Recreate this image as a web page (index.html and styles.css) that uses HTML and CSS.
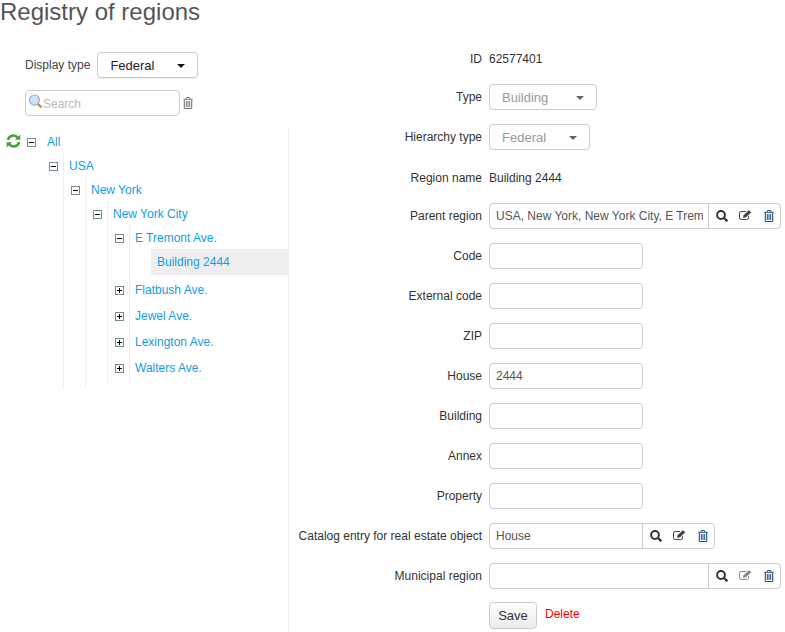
FILE: index.html
```html
<!DOCTYPE html>
<html lang="en">
<head>
<meta charset="utf-8">
<title>Registry of regions</title>
<link rel="stylesheet" href="styles.css">
</head>
<body>
<svg class="defs" width="0" height="0" aria-hidden="true">
  <symbol id="i-search" viewBox="0 0 12 12"><circle cx="5" cy="5" r="3.900" fill="none" stroke="currentColor" stroke-width="2"/><path d="M7.700 7.700l3.600 3.600" fill="none" stroke="currentColor" stroke-width="2.300"/></symbol>
  <symbol id="i-edit" viewBox="0 0 13 10"><path d="M9.500 6v1.800A1.700 1.700 0 0 1 7.800 9.500H2.200A1.700 1.700 0 0 1 .5 7.800V3.200A1.700 1.700 0 0 1 2.200 1.500H7" fill="none" stroke="currentColor" stroke-width="1"/><path d="M4.500 5.200L9.800 .3 12.400 2.300 7 7.300 4 7.900z" fill="currentColor"/></symbol>
  <symbol id="i-trash" viewBox="0 0 10 12"><path d="M.3 2.300h9.400M3.200 2.300V1.200q0-.7.7-.7h2.200q.7 0 .7.700v1.100" fill="none" stroke="currentColor" stroke-width="1"/><path d="M1.300 2.800v8q0 .7.7.7h6q.7 0 .7-.7v-8" fill="none" stroke="currentColor" stroke-width="1.100"/><path d="M3.300 4v6M5 4v6M6.700 4v6" fill="none" stroke="currentColor" stroke-width="1"/></symbol>
</svg>
<div class="page">
  <h1 class="title">Registry of regions</h1>
  <div class="main">
    <div class="left">
      <div class="filter">
        <span class="filter-label">Display type</span>
        <div class="select select-left"><span>Federal</span><i class="caret"></i></div>
      </div>
      <div class="search-row">
        <div class="search">
          <svg class="search-icon" width="15" height="15" viewBox="0 0 15 15"><path d="M9.500 9.500l4 4" stroke="#c98a4a" stroke-width="2.400"/><circle cx="6.500" cy="6" r="5" fill="#cfe3f6" stroke="#8fb4d8" stroke-width="1.200"/></svg>
          <span>Search</span>
        </div>
        <svg class="search-trash"><use href="#i-trash"/></svg>
      </div>
      <div class="tree">
        <div class="node">
          <div class="row root">
            <svg class="refresh" width="15" height="14" viewBox="0 0 15 14"><path d="M2 6A5.400 5.400 0 0 1 11.700 3.800M13 8A5.400 5.400 0 0 1 3.300 10.200" fill="none" stroke="#4a9e3c" stroke-width="2.600"/><path d="M14.300 .4v5.400H8.900zM.7 13.600V8.200h5.400z" fill="#4a9e3c"/></svg>
            <i class="tog minus"></i><a>All</a>
          </div>
          <div class="kids k1">
            <div class="node">
              <div class="row"><i class="tog minus"></i><a>USA</a></div>
              <div class="kids">
                <div class="node">
                  <div class="row"><i class="tog minus"></i><a>New York</a></div>
                  <div class="kids">
                    <div class="node">
                      <div class="row"><i class="tog minus"></i><a>New York City</a></div>
                      <div class="kids">
                        <div class="node">
                          <div class="row"><i class="tog minus"></i><a>E Tremont Ave.</a></div>
                          <div class="kids leaf">
                            <div class="row selected"><a>Building 2444</a></div>
                          </div>
                        </div>
                        <div class="row"><i class="tog plus"></i><a>Flatbush Ave.</a></div>
                        <div class="row"><i class="tog plus"></i><a>Jewel Ave.</a></div>
                        <div class="row"><i class="tog plus"></i><a>Lexington Ave.</a></div>
                        <div class="row"><i class="tog plus"></i><a>Walters Ave.</a></div>
                      </div>
                    </div>
                  </div>
                </div>
              </div>
            </div>
          </div>
        </div>
      </div>
    </div>
    <div class="form">
      <div class="f-row f-id"><label>ID</label><span>62577401</span></div>
      <div class="f-row"><label>Type</label><div class="select off sel-type"><span>Building</span><i class="caret"></i></div></div>
      <div class="f-row"><label>Hierarchy type</label><div class="select off sel-hier"><span>Federal</span><i class="caret"></i></div></div>
      <div class="f-row f-name"><label>Region name</label><span>Building 2444</span></div>
      <div class="f-row"><label>Parent region</label>
        <div class="group wide"><div class="g-input">USA, New York, New York City, E Tremont Ave.</div><div class="g-btns"><svg class="ic-s"><use href="#i-search"/></svg><svg class="ic-e"><use href="#i-edit"/></svg><svg class="ic-t"><use href="#i-trash"/></svg></div></div>
      </div>
      <div class="f-row"><label>Code</label><div class="input"></div></div>
      <div class="f-row"><label>External code</label><div class="input"></div></div>
      <div class="f-row"><label>ZIP</label><div class="input"></div></div>
      <div class="f-row"><label>House</label><div class="input">2444</div></div>
      <div class="f-row"><label>Building</label><div class="input"></div></div>
      <div class="f-row"><label>Annex</label><div class="input"></div></div>
      <div class="f-row"><label>Property</label><div class="input"></div></div>
      <div class="f-row"><label>Catalog entry for real estate object</label>
        <div class="group narrow"><div class="g-input">House</div><div class="g-btns"><svg class="ic-s"><use href="#i-search"/></svg><svg class="ic-e"><use href="#i-edit"/></svg><svg class="ic-t"><use href="#i-trash"/></svg></div></div>
      </div>
      <div class="f-row"><label>Municipal region</label>
        <div class="group wide"><div class="g-input"></div><div class="g-btns"><svg class="ic-s"><use href="#i-search"/></svg><svg class="ic-e muted"><use href="#i-edit"/></svg><svg class="ic-t"><use href="#i-trash"/></svg></div></div>
      </div>
      <div class="f-row f-actions"><span></span><div class="actions"><button class="save" type="button">Save</button><a class="delete">Delete</a></div></div>
    </div>
  </div>
</div>
</body>
</html>
```
FILE: styles.css
```css
* { box-sizing: border-box; }
html, body { margin: 0; padding: 0; }
body { font: 12px/18px "Liberation Sans", Arial, sans-serif; color: #333; background: #fff; }
.defs { position: absolute; }
.page { height: 632px; overflow: hidden; display: flex; flex-direction: column; }
.title { margin: 0; height: 40px; font-size: 24px; line-height: 24px; font-weight: 400; color: #555; flex: none; }
.main { flex: 1; display: flex; min-height: 0; }
.left { width: 289px; flex: none; display: flex; flex-direction: column; }
.filter { display: flex; align-items: center; padding: 12px 0 0 25px; gap: 7px; }
.filter-label { color: #444; }
.select { display: flex; align-items: center; justify-content: space-between; height: 26px; border: 1px solid #ccc; border-radius: 4px; padding: 2px 12px 0; background: #fff; font-size: 13px; }
.select-left { width: 101px; color: #222; box-shadow: 0 1px 1px rgba(0,0,0,.08); }
.off { color: #999; }
.sel-type { width: 108px; }
.sel-hier { width: 101px; }
.caret { width: 0; height: 0; border-left: 4px solid transparent; border-right: 4px solid transparent; border-top: 4px solid #111; }
.off .caret { border-top-color: #666; }
.search-row { display: flex; align-items: center; padding: 12px 0 0 25px; gap: 2px; }
.search { width: 155px; height: 26px; border: 1px solid #ccc; border-radius: 4px; display: flex; align-items: center; padding: 2px 0 0 2px; color: #bbb; }
.search-icon { margin-top: -5px; flex: none; }
.search-trash { width: 10px; height: 12px; color: #777; margin-left: 1px; }
.tree { flex: 1; margin-top: 11px; padding-top: 2px; padding-left: 41px; border-right: 1px solid #eee; }
.row { display: flex; align-items: center; height: 26px; }
.row a { color: #0f9de8; padding-left: 5px; }
.kids { margin: -2px 0 0 21px; padding-bottom: 2px; border-left: 1px solid #eee; }
.k1 { margin-left: 22px; }
.leaf { border-left: 0; }
.kids .leaf .row a { padding-left: 6px; }
.selected { background: #eee; }
.tog { width: 9px; height: 9px; margin-left: -15px; margin-right: 6px; flex: none; border: 1px solid #6f8f8f; background: linear-gradient(#000,#000) center / 5px 1px no-repeat; }
.plus { background: linear-gradient(#000,#000) center / 5px 1px no-repeat, linear-gradient(#000,#000) center / 1px 5px no-repeat; }
.root .tog { margin-left: 0; margin-right: 5px; }
.root a { padding-left: 6px; }
.refresh { margin-left: -35px; margin-right: 6px; margin-top: -2px; flex: none; }
.form { flex: 1; display: flex; flex-direction: column; padding-top: 8px; }
.f-row { display: grid; grid-template-columns: 193px 1fr; column-gap: 7px; align-items: center; min-height: 26px; margin-bottom: 14px; }
.f-row label { text-align: right; white-space: nowrap; }
.f-id { min-height: 22px; }
.f-name { min-height: 22px; margin-top: 3px; }
.input { width: 154px; height: 26px; border: 1px solid #ccc; border-radius: 4px; padding: 3px 6px; color: #555; }
.group { display: flex; height: 26px; border: 1px solid #ccc; border-radius: 4px; }
.wide { width: 292px; }
.narrow { width: 226px; }
.g-input { flex: 1; min-width: 0; overflow: hidden; white-space: nowrap; margin: 0 5px 0 6px; padding: 3px 0; color: #555; }
.g-btns { width: 72px; flex: none; border-left: 1px solid #ccc; display: flex; align-items: center; padding-left: 7px; }
.ic-s { width: 12px; height: 12px; color: #333; margin-right: 11px; }
.ic-e { width: 13px; height: 10px; color: #444; margin-right: 12px; margin-top: -2px; }
.ic-t { width: 10px; height: 12px; color: #23507e; }
.muted { color: #888; }
.f-actions { margin: -1px 0 0; }
.actions { display: flex; align-items: center; gap: 8px; }
.save { width: 48px; height: 27px; padding: 0; border: 1px solid #ccc; border-radius: 4px; background: linear-gradient(#fff,#ebebeb); color: #333; font: 13px "Liberation Sans", Arial, sans-serif; }
.delete { color: #f00; margin-top: -3px; }
```
